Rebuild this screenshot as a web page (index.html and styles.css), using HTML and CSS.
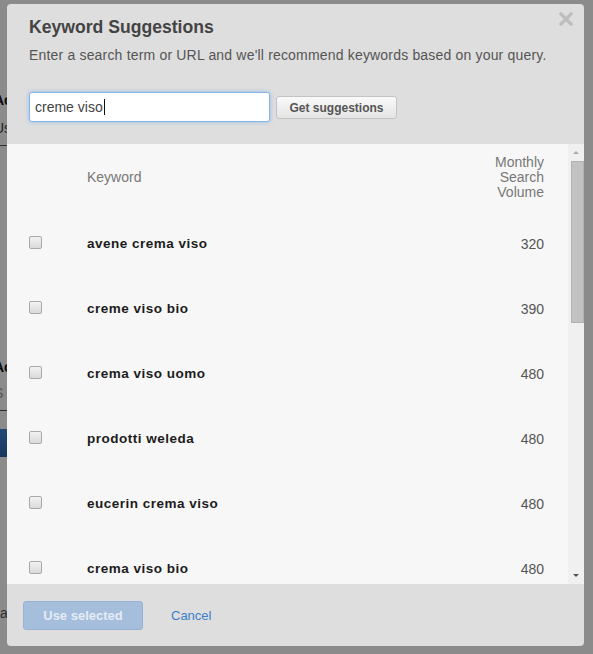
FILE: index.html
```html
<!DOCTYPE html>
<html>
<head>
<meta charset="utf-8">
<link rel="stylesheet" href="styles.css">
</head>
<body>
<div class="page">
  <div class="bg-title">Ac</div>
  <div class="bg-sub">Us</div>
  <div class="bg-rule"></div>
  <div class="bg-title second">Ac</div>
  <div class="bg-sub light">S</div>
  <div class="bg-rule"></div>
  <div class="bg-button"></div>
  <div class="bg-foot">a</div>
</div>
<div class="overlay"></div>
<div class="dialog">
  <div class="dialog-head">
    <h2 class="dialog-title">Keyword Suggestions</h2>
    <p class="dialog-desc">Enter a search term or URL and we'll recommend keywords based on your query.</p>
    <div class="search-row">
      <div class="search-input">creme viso<span class="caret"></span></div>
      <button class="btn-suggest">Get suggestions</button>
    </div>
    <svg class="close" width="14" height="14" viewBox="0 0 14 14"><path d="M2 2L12 12M12 2L2 12" stroke="#bdbdbd" stroke-width="3.2" stroke-linecap="square"/></svg>
  </div>
  <div class="list-wrap">
    <div class="list">
      <div class="row head">
        <span></span>
        <span class="col-kw">Keyword</span>
        <span class="col-vol">Monthly<br>Search<br>Volume</span>
      </div>
      <div class="row"><span><input type="checkbox" class="cb"></span><span class="kw">avene crema viso</span><span class="vol">320</span></div>
      <div class="row"><span><input type="checkbox" class="cb"></span><span class="kw">creme viso bio</span><span class="vol">390</span></div>
      <div class="row"><span><input type="checkbox" class="cb"></span><span class="kw">crema viso uomo</span><span class="vol">480</span></div>
      <div class="row"><span><input type="checkbox" class="cb"></span><span class="kw">prodotti weleda</span><span class="vol">480</span></div>
      <div class="row"><span><input type="checkbox" class="cb"></span><span class="kw">eucerin crema viso</span><span class="vol">480</span></div>
      <div class="row"><span><input type="checkbox" class="cb"></span><span class="kw">crema viso bio</span><span class="vol">480</span></div>
      <div class="row"><span><input type="checkbox" class="cb"></span><span class="kw">crema viso naturale</span><span class="vol">480</span></div>
    </div>
    <div class="scrollbar">
      <svg class="arrow" width="16" height="10" viewBox="0 0 16 10"><path d="M5 7L8 4L11 7Z" fill="#a8a8a8"/></svg>
      <div class="thumb"></div>
      <div class="track-rest"></div>
      <svg class="arrow" width="16" height="10" viewBox="0 0 16 10"><path d="M5 3L8 6L11 3Z" fill="#505050"/></svg>
    </div>
  </div>
  <div class="dialog-foot">
    <button class="btn-use">Use selected</button>
    <a class="cancel">Cancel</a>
  </div>
</div>
</body>
</html>
```
FILE: styles.css
```css
html, body {
  margin: 0;
  padding: 0;
}
body {
  width: 593px;
  height: 654px;
  overflow: hidden;
  background: #ffffff;
  font-family: "Liberation Sans", Arial, sans-serif;
  position: relative;
}
.page {
  margin-left: -6px;
  padding-top: 92px;
  display: flex;
  flex-direction: column;
  color: #111;
}
.bg-title {
  font-weight: bold;
  font-size: 14px;
  line-height: 16px;
}
.bg-title.second {
  margin-top: 213px;
}
.bg-sub {
  font-size: 14px;
  line-height: 16px;
  margin-top: 12px;
  color: #444;
}
.bg-sub.light {
  color: #999;
  margin-top: 10px;
}
.bg-rule {
  width: 40px;
  height: 1px;
  background: #555;
  margin-top: 9px;
}
.bg-button {
  width: 60px;
  height: 28px;
  margin-top: 18px;
  background: linear-gradient(#3f86d6, #2a66b0);
}
.bg-foot {
  margin-top: 148px;
  font-size: 14px;
  margin-left: 6px;
  color: #555;
}
.overlay {
  position: absolute;
  inset: 0;
  background: rgba(0, 0, 0, 0.455);
}
.dialog {
  position: absolute;
  left: 7px;
  top: 4px;
  width: 577px;
  height: 642px;
  background: #dedede;
  border-radius: 4px;
  overflow: hidden;
  display: flex;
  flex-direction: column;
}
.dialog-head {
  position: relative;
  height: 140px;
  box-sizing: border-box;
  padding: 12px 22px 0 22px;
}
.dialog-title {
  margin: 0;
  font-size: 17.6px;
  line-height: 22px;
  font-weight: bold;
  color: #444;
}
.dialog-desc {
  margin: 7px 0 0 0;
  font-size: 14px;
  letter-spacing: 0.18px;
  line-height: 20px;
  color: #555;
}
.search-row {
  margin-top: 27px;
  display: flex;
  align-items: center;
  gap: 6px;
}
.search-input {
  box-sizing: border-box;
  width: 241px;
  height: 30px;
  background: #fff;
  border: 1px solid #86b6e4;
  border-radius: 3px;
  box-shadow: 0 0 4px rgba(82, 160, 236, 0.55);
  padding: 0 5px;
  font-size: 14px;
  line-height: 28px;
  color: #444;
  display: flex;
  align-items: center;
}
.caret {
  display: inline-block;
  width: 1px;
  height: 16px;
  background: #111;
  margin-left: 1px;
}
.btn-suggest {
  box-sizing: border-box;
  width: 121px;
  height: 23px;
  margin-top: 1px;
  background: linear-gradient(#fafafa, #e4e4e4);
  border: 1px solid #c3c3c3;
  border-radius: 3px;
  font-family: "Liberation Sans", Arial, sans-serif;
  font-size: 12px;
  font-weight: bold;
  color: #555;
  padding: 0;
}
.close {
  position: absolute;
  right: 11px;
  top: 8px;
}
.list-wrap {
  height: 440px;
  display: flex;
  background: #f7f7f7;
}
.list {
  flex: 1;
  overflow: hidden;
}
.row {
  display: grid;
  grid-template-columns: 80px 1fr auto;
  align-items: center;
  height: 65px;
  padding-right: 24px;
  box-sizing: border-box;
}
.row.head {
  height: 67px;
  padding-bottom: 1px;
}
.col-kw {
  font-size: 14px;
  color: #777;
}
.col-vol {
  font-size: 14px;
  line-height: 15px;
  color: #777;
  text-align: right;
}
.cb {
  appearance: none;
  -webkit-appearance: none;
  display: block;
  margin: 0 0 0 22px;
  width: 13px;
  height: 13px;
  box-sizing: border-box;
  border: 1px solid #a9a9a9;
  border-radius: 2px;
  background: linear-gradient(#f2f2f2, #dadada);
  position: relative;
  top: -1px;
}
.kw {
  font-size: 13.5px;
  font-weight: bold;
  letter-spacing: 0.5px;
  color: #1c1c1c;
}
.vol {
  font-size: 14px;
  color: #555;
  text-align: right;
}
.scrollbar {
  width: 16px;
  background: #f0f0f0;
  display: flex;
  flex-direction: column;
  align-items: center;
  padding-top: 3px;
  padding-bottom: 3px;
  box-sizing: border-box;
}
.arrow {
  display: block;
  flex: none;
}
.thumb {
  flex: none;
  width: 13px;
  height: 162px;
  margin-top: 4px;
  margin-left: 2px;
  box-sizing: border-box;
  background: #c2c2c2;
  border: 1px solid #b2b2b2;
}
.track-rest {
  flex: 1;
}
.dialog-foot {
  flex: 1;
  display: flex;
  align-items: center;
  padding: 0 16px;
  gap: 28px;
}
.btn-use {
  box-sizing: border-box;
  width: 120px;
  height: 29px;
  background: #a5bedc;
  border: 1px solid #98b2d3;
  border-radius: 3px;
  color: #e4ebf4;
  font-family: "Liberation Sans", Arial, sans-serif;
  font-size: 13px;
  font-weight: bold;
  padding: 0;
}
.cancel {
  font-size: 13px;
  color: #3a80cc;
}
```
